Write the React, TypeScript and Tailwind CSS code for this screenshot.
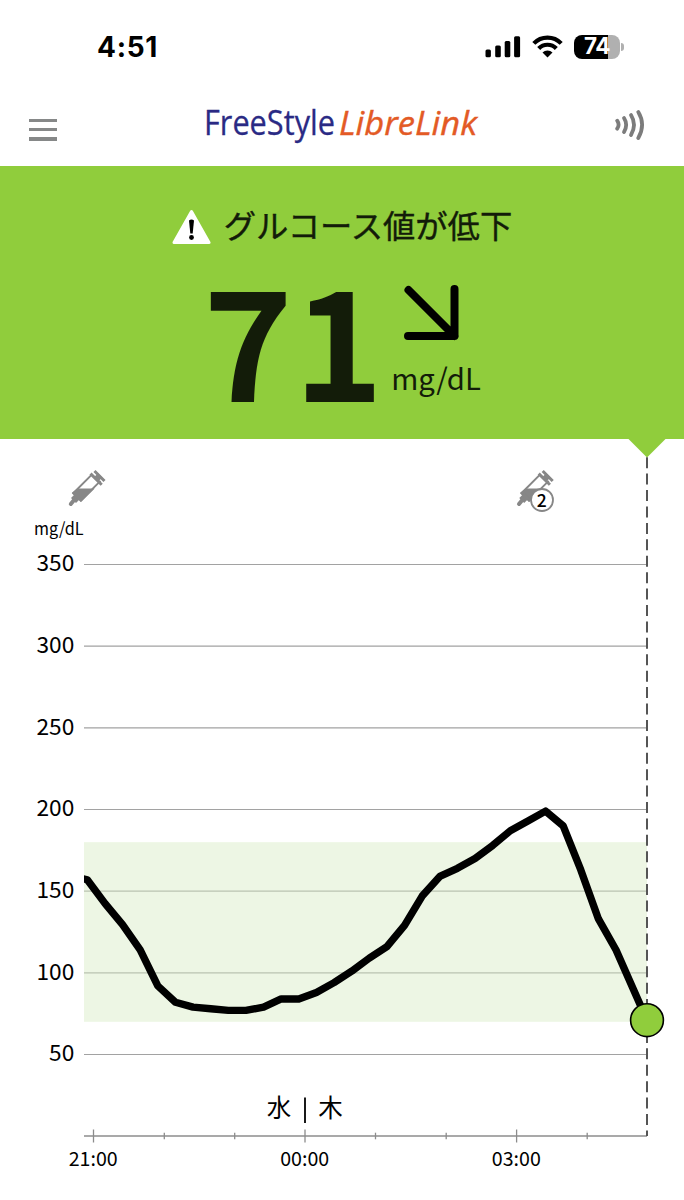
const cjk = "[font-family:'Noto_Sans_CJK_JP',sans-serif]";

// one reading every 15 minutes, mg/dL
const readings = [
  157, 142.5, 129.5, 114, 92, 82, 79, 78, 77, 77, 79, 84, 84, 88, 94, 101, 109, 116, 129, 147, 159,
  164, 170, 178, 187, 193, 199, 190, 163, 133, 114, 89.5,
];
const current = 71;

const LEFT = 84;
const RIGHT = 647;
const STEP = 17.625;
const AXIS = 697;

const yOf = (value: number) => 125.5 + (350 - value) * 1.6333;

const levels = [350, 300, 250, 200, 150, 100, 50];
const hours = [
  { x: 93.5, label: "21:00" },
  { x: 164.3 },
  { x: 234.7 },
  { x: 305, label: "00:00" },
  { x: 375.5 },
  { x: 446.2 },
  { x: 516.6, label: "03:00" },
  { x: 587.2 },
];

function StatusBar() {
  return (
    <div className="flex h-[90px] items-center justify-between pl-[97px] pr-[60px] pt-[3px]">
      <span className="text-[28px] font-bold leading-none tracking-[0.7px] [font-family:Inter,sans-serif]">4:51</span>
      <div className="flex items-center">
        <svg width="36" height="24" viewBox="0 0 36 24">
          <rect x="0.5" y="14.5" width="5.4" height="7.8" rx="1.5" />
          <rect x="10.2" y="10.6" width="5.6" height="11.7" rx="1.5" />
          <rect x="19.7" y="6" width="5.6" height="16.3" rx="1.5" />
          <rect x="29.1" y="1.2" width="6" height="21.1" rx="1.5" />
        </svg>
        <svg width="31" height="24" viewBox="0 0 31 24" className="ml-[11px]" fill="none" stroke="#000" strokeWidth="4.2">
          <path d="M1.8 8.4a19 19 0 0 1 27.4 0" />
          <path d="M6.7 13.5a12.2 12.2 0 0 1 17.6 0" />
          <path d="M15.5 22.6l-5-5a6.8 6.8 0 0 1 10 0z" fill="#000" stroke="none" />
        </svg>
        <div className="ml-[11px] flex h-6 w-[46px] items-center justify-center rounded-[8px] bg-[linear-gradient(to_right,#000_34px,#b0b0b0_34px)]">
          <span className="text-[22.5px] font-bold leading-none tracking-[-0.5px] text-white [font-family:Inter,sans-serif]">
            74
          </span>
        </div>
        <div className="ml-px h-[8px] w-[3px] rounded-r-full bg-[#b0b0b0]" />
      </div>
    </div>
  );
}

function NavBar() {
  return (
    <div className="flex h-[75.5px] items-start justify-between pl-[29px] pr-[38px]">
      <div className="flex flex-col gap-[6px] pt-[29px]">
        <span className="h-[3.2px] w-[28px] bg-[#868888]" />
        <span className="h-[3.2px] w-[28px] bg-[#868888]" />
        <span className="h-[3.2px] w-[28px] bg-[#868888]" />
      </div>
      <svg width="290" height="60" viewBox="0 0 290 60" className="ml-[10px]">
        <text x="8" y="44.5" fontSize="34" fill="#2a2a84" stroke="#2a2a84" strokeWidth="0.3" textLength="131" lengthAdjust="spacingAndGlyphs" className="[font-family:'Open_Sans',sans-serif]">
          FreeStyle
        </text>
        <text x="143" y="45" fontSize="33" fill="#e35a25" stroke="#e35a25" strokeWidth="0.4" fontStyle="italic" textLength="138" lengthAdjust="spacingAndGlyphs" className="[font-family:'Open_Sans',sans-serif]">
          LibreLink
        </text>
      </svg>
      <svg width="31" height="32" viewBox="0 0 31 32" className="mt-[18.5px]" fill="none" stroke="#7c7c7c" strokeWidth="3.8" strokeLinecap="round">
        <path d="M2.2 11.7q2.8 4 0 8" />
        <path d="M9 9q4.3 6.7 0 14" />
        <path d="M16 6q6 9.7 0 20" />
        <path d="M23.3 3q7.6 12.5 0 26" />
      </svg>
    </div>
  );
}

function Reading() {
  return (
    <div className={`flex h-[273.5px] flex-col items-center bg-[#90cd3c] text-[#131c09] ${cjk}`}>
      <div className="mt-[35px] flex h-[46px] items-center">
        <svg width="39" height="36" viewBox="0 0 39 36" className="mt-[7px]">
          <path d="M19.5 2.5L37 33.5H2z" fill="#fff" stroke="#fff" strokeWidth="3" strokeLinejoin="round" />
          <path d="M17 11.5q2.5-2 5 0l-1.3 13h-2.4z" fill="#000" />
          <circle cx="19.5" cy="28.5" r="2.4" fill="#000" />
        </svg>
        <span className="ml-[13px] whitespace-nowrap text-[32.3px] font-normal leading-[46px] [-webkit-text-stroke:0.4px_#131c09]">
          グルコース値が低下
        </span>
      </div>
      <div className="mt-[19px] flex h-[140px]">
        <span className="w-[184px] text-[152px] font-bold leading-[140px] tracking-[1px]">{current}</span>
        <div className="flex flex-col">
          <svg width="60" height="60" viewBox="0 0 60 60" className="ml-[14.5px] mt-[17px]" fill="none" stroke="#000" strokeWidth="8" strokeLinecap="round" strokeLinejoin="round">
            <path d="M6.5 7l46 46M52.5 6v47H6" />
          </svg>
          <span className="ml-[4px] mt-[9px] text-[29.3px] leading-[50px]">mg/dL</span>
        </div>
      </div>
    </div>
  );
}

function Syringe({ x, count }: { x: number; count?: number }) {
  return (
    <g transform={`translate(${x} 31)`} stroke="#878787" fill="none">
      <path d="M23.3 4.6L4.7 23.2l7.5 7.5L32 10.9" strokeWidth="2" />
      <path d="M9 18.5h17.2L12.6 32l-9.2-9.2z" fill="#878787" stroke="none" />
      <path d="M22 3.6L33.2 14.8M26 1l10 10" strokeWidth="3" />
      <path d="M27.6 9.4l4-4" strokeWidth="6" />
      <path d="M10 25.5L5 30.5" strokeWidth="7" />
      <path d="M6 29.5L2.3 34" strokeWidth="4" strokeLinecap="round" />
      {count && (
        <>
          <circle cx="25.3" cy="30" r="11" fill="#fff" strokeWidth="1.8" />
          <text x="25.1" y="36.5" textAnchor="middle" fontSize="17.5" fontWeight="500" fill="#000" stroke="none">
            {count}
          </text>
        </>
      )}
    </g>
  );
}

function Chart() {
  const points = readings.map((value, i) => `${87.3 + i * STEP},${yOf(value)}`);

  return (
    <svg width="684" height="761" viewBox="0 0 684 761" className={`block ${cjk}`}>
      <defs>
        <clipPath id="plot">
          <rect x={LEFT} y="0" width="600" height={AXIS} />
        </clipPath>
      </defs>
      <path d="M628.5 -1v1L647 18.5L665.5 0v-1z" fill="#90cd3c" />
      <Syringe x={68.5} />
      <Syringe x={516.7} count={2} />

      <text x="34" y="95.5" fontSize="17.3" textLength="49.5" lengthAdjust="spacingAndGlyphs">mg/dL</text>
      {levels.map((level) => (
        <g key={level}>
          <line x1={LEFT} x2={RIGHT} y1={yOf(level)} y2={yOf(level)} stroke="#a2a2a2" strokeWidth="1.2" />
          <text x="74.3" y={yOf(level) + 6.8} textAnchor="end" fontSize="22.7">{level}</text>
        </g>
      ))}
      {/* target range 70-180 */}
      <rect x={LEFT} y={yOf(180)} width={RIGHT - LEFT} height={yOf(70) - yOf(180)} fill="#d7ecc5" fillOpacity="0.46" />

      <line x1={LEFT} x2={RIGHT} y1={AXIS} y2={AXIS} stroke="#8c8c8c" strokeWidth="1.3" />
      {hours.map(({ x, label }) => (
        <g key={x}>
          <line x1={x} x2={x} y1={AXIS - (label ? 6.5 : 3.3)} y2={AXIS + (label ? 6.5 : 3.3)} stroke="#8c8c8c" strokeWidth="1.3" />
          {label && <text x={x - 0.3} y="726.5" textAnchor="middle" fontSize="19.6">{label}</text>}
        </g>
      ))}
      <text x="279" y="677.5" textAnchor="middle" fontSize="24.5">水</text>
      <line x1="305" x2="305" y1="658.5" y2="684" stroke="#000" strokeWidth="1.8" />
      <text x="330.5" y="677.5" textAnchor="middle" fontSize="24.5">木</text>

      <line x1={RIGHT} x2={RIGHT} y1="18.2" y2={AXIS} stroke="#555" strokeWidth="2" strokeDasharray="11 5.42" />
      <polyline
        points={`80,439 ${points.join(" ")} ${RIGHT},${yOf(current)}`}
        fill="none"
        stroke="#000"
        strokeWidth="7.4"
        strokeLinejoin="round"
        clipPath="url(#plot)"
      />
      <circle cx={RIGHT} cy={yOf(current)} r="16.4" fill="#90cd3c" stroke="#000" strokeWidth="1.6" />
    </svg>
  );
}

export default function App() {
  return (
    <main className="w-[684px] overflow-hidden bg-white text-black">
      <StatusBar />
      <NavBar />
      <Reading />
      <Chart />
    </main>
  );
}
